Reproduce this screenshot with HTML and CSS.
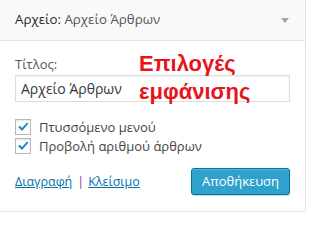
FILE: index.html
```html
<!DOCTYPE html>
<html lang="el">
<head>
<meta charset="utf-8">
<title>Αρχείο</title>
<link rel="stylesheet" href="styles.css">
</head>
<body>
<div class="widget">
  <div class="widget-top">
    <h3 class="widget-title">Αρχείο:<span class="in-title"> Αρχείο Άρθρων</span></h3>
    <svg class="arrow" width="8" height="5" viewBox="0 0 8 5"><path d="M0 0H8L4 5Z" fill="#a0a5aa"/></svg>
  </div>
  <div class="widget-inside">
    <label class="field-label">Τίτλος:</label>
    <div class="text-input">Αρχείο Άρθρων</div>
    <div class="checks">
      <div class="check-row">
        <span class="cb"><svg width="14" height="14" viewBox="0 0 14 14"><path d="M2.2 7.2L3.8 5.7L6 8L11 2.4L12.4 3.7L6 11Z" fill="#1e8cbe"/></svg></span>
        <span class="check-label">Πτυσσόμενο μενού</span>
      </div>
      <div class="check-row">
        <span class="cb"><svg width="14" height="14" viewBox="0 0 14 14"><path d="M2.2 7.2L3.8 5.7L6 8L11 2.4L12.4 3.7L6 11Z" fill="#1e8cbe"/></svg></span>
        <span class="check-label">Προβολή αριθμού άρθρων</span>
      </div>
    </div>
    <div class="actions">
      <div class="links"><a href="#" class="link">Διαγραφή</a><span class="sep">|</span><a href="#" class="link">Κλείσιμο</a></div>
      <button class="button-primary">Αποθήκευση</button>
    </div>
  </div>
  <div class="annotation">Επιλογές<br>εμφάνισης</div>
</div>
</body>
</html>
```
FILE: styles.css
```css
html, body {
  margin: 0;
  padding: 0;
  background: #ffffff;
}
body {
  font-family: "Open Sans", "Noto Sans", sans-serif;
  font-size: 13px;
  color: #444;
}
.widget {
  position: relative;
  width: 306px;
  box-sizing: border-box;
  border-right: 1px solid #e5e5e5;
  border-bottom: 1px solid #e5e5e5;
  background: #fff;
}
.widget-top {
  height: 40px;
  background: #f9f9f9;
  border-bottom: 1px solid #e5e5e5;
  display: flex;
  align-items: center;
  justify-content: space-between;
  padding: 0 15px 0 15px;
}
.widget-title {
  margin: 0;
  font-size: 13.3px;
  font-weight: 400;
  line-height: 1;
  color: #23282d;
}
.in-title {
  color: #555;
}
.arrow {
  display: block;
  margin-right: 1px;
}
.widget-inside {
  padding: 14px 15px 16px 15px;
  display: flex;
  flex-direction: column;
}
.field-label {
  display: block;
  line-height: 18px;
  color: #555;
}
.text-input {
  margin-top: 2px;
  height: 27px;
  box-sizing: border-box;
  border: 1px solid #ddd;
  box-shadow: inset 0 1px 2px rgba(0,0,0,0.07);
  padding: 0 5px;
  font-size: 14px;
  line-height: 25px;
  color: #32373c;
}
.checks {
  margin-top: 17px;
  display: flex;
  flex-direction: column;
  gap: 3px;
}
.check-row {
  display: flex;
  align-items: center;
  gap: 8px;
  height: 16px;
}
.cb {
  width: 16px;
  height: 16px;
  box-sizing: border-box;
  border: 1px solid #b4b9be;
  box-shadow: inset 0 1px 2px rgba(0,0,0,0.1);
  background: #fff;
  display: flex;
  align-items: center;
  justify-content: center;
}
.cb svg {
  display: block;
}
.check-label {
  line-height: 16px;
  color: #444;
}
.actions {
  margin-top: 14px;
  display: flex;
  align-items: center;
  justify-content: space-between;
}
.links {
  display: flex;
  align-items: center;
  font-size: 12.5px;
}
.link {
  color: #0073aa;
  text-decoration: underline;
}
.sep {
  color: #8a3d8a;
  margin: 0 4px 0 5px;
}
.button-primary {
  height: 27px;
  box-sizing: border-box;
  padding: 0 10px;
  font-family: "Open Sans", "Noto Sans", sans-serif;
  font-size: 13px;
  line-height: 25px;
  color: #fff;
  background: #2ea2cc;
  border: 1px solid #0074a2;
  border-radius: 3px;
  box-shadow: inset 0 1px 0 rgba(120,200,230,0.5), 0 1px 0 rgba(0,0,0,0.15);
  width: 99px;
}
.annotation {
  position: absolute;
  left: 139px;
  top: 50px;
  font-family: "Liberation Sans", Arial, sans-serif;
  font-weight: 700;
  font-size: 22px;
  line-height: 28px;
  color: #e8141c;
}
```
